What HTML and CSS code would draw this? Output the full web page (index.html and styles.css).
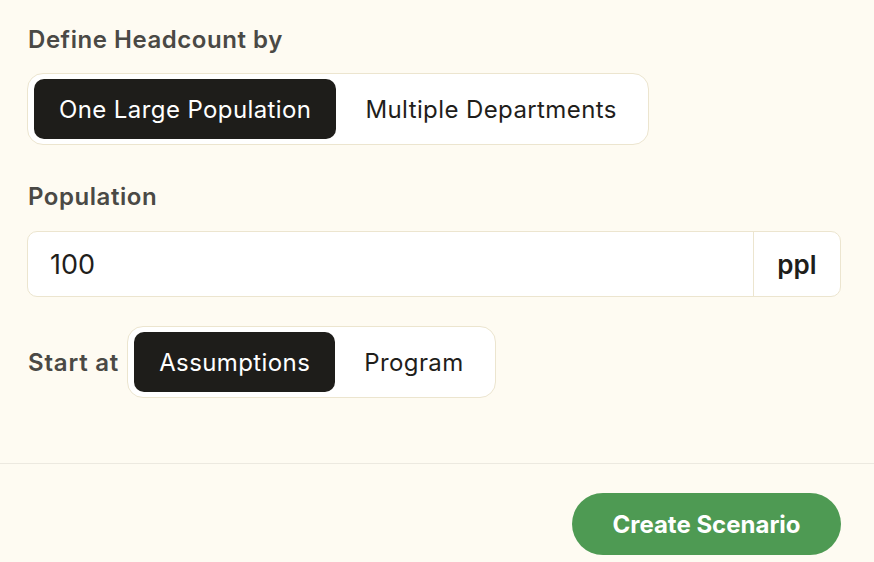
FILE: index.html
```html
<!DOCTYPE html>
<html lang="en">
<head>
  <meta charset="UTF-8" />
  <title>New Scenario</title>
  <link rel="stylesheet" href="styles.css">
</head>
<body>
  <div class="form">
    <div class="field-label">Define Headcount by</div>
    <div class="segmented">
      <button class="seg active">One Large Population</button>
      <button class="seg">Multiple Departments</button>
    </div>

    <div class="field-label population-label">Population</div>
    <div class="input-group">
      <input type="text" value="100">
      <span class="suffix">ppl</span>
    </div>

    <div class="start-row">
      <span class="start-label">Start at</span>
      <div class="segmented">
        <button class="seg active">Assumptions</button>
        <button class="seg">Program</button>
      </div>
    </div>
  </div>

  <div class="footer">
    <button class="create">Create Scenario</button>
  </div>
</body>
</html>
```

FILE: styles.css
```css
* {
  box-sizing: border-box;
  margin: 0;
  padding: 0;
}

body {
  font-family: Inter, 'Noto Sans', sans-serif;
  background: #fefbf2;
  color: #1f1e1b;
  height: 562px;
  overflow: hidden;
}

.form {
  padding: 26px 33px 0 27px;
  height: 463px;
}

.field-label {
  font-size: 24px;
  font-weight: 600;
  line-height: 28px;
  letter-spacing: 0.55px;
  color: #4a4945;
  padding-left: 1px;
  margin-bottom: 19px;
}

.population-label {
  margin-top: 38px;
  margin-bottom: 20px;
}

.segmented {
  display: inline-flex;
  background: #ffffff;
  border: 1px solid #ece5cf;
  border-radius: 16px;
  padding: 5px 6px;
}

.seg {
  font-family: inherit;
  font-size: 24px;
  letter-spacing: 0.4px;
  color: #1f1e1b;
  background: transparent;
  border: none;
  border-radius: 10px;
  height: 60px;
  padding: 0 25px 0 29px;
  cursor: pointer;
}

.seg.active {
  background: #1e1d1a;
  color: #ffffff;
  padding: 0 25px;
}

.input-group {
  display: flex;
  height: 66px;
  background: #ffffff;
  border: 1px solid #ece5cf;
  border-radius: 10px;
  overflow: hidden;
}

.input-group input {
  flex: 1;
  border: none;
  outline: none;
  font-family: inherit;
  font-size: 27px;
  color: #1f1e1b;
  padding-left: 22px;
  background: transparent;
}

.suffix {
  width: 87px;
  border-left: 1px solid #ece5cf;
  display: flex;
  align-items: center;
  justify-content: center;
  font-size: 26px;
  font-weight: 600;
}

.start-row {
  display: flex;
  align-items: center;
  gap: 8px;
  margin-top: 29px;
}

.start-label {
  font-size: 24px;
  font-weight: 600;
  letter-spacing: 0.8px;
  color: #4a4945;
  padding-left: 1px;
}

.footer {
  border-top: 1px solid #ece9e0;
  display: flex;
  justify-content: flex-end;
  padding: 29px 33px 0 0;
}

.create {
  font-family: inherit;
  font-size: 24px;
  font-weight: 700;
  color: #ffffff;
  background: #4e9a53;
  border: none;
  border-radius: 31px;
  height: 62px;
  width: 269px;
  cursor: pointer;
}
```
